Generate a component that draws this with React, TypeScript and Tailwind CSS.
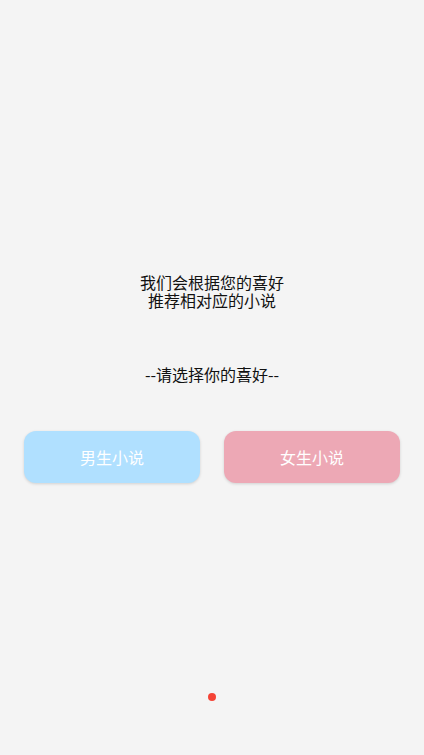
import React from "react";

export default function App() {
  return (
    <div
      className="relative h-[755px] w-[424px] bg-[#f4f4f4] flex flex-col justify-center overflow-hidden"
      style={{ fontFamily: '"Noto Sans CJK SC", "Noto Sans", sans-serif' }}
    >
      <div className="flex flex-col items-center text-[16px] leading-[18px] text-[#111]">
        <p>我们会根据您的喜好</p>
        <p>推荐相对应的小说</p>
        <p className="mt-[56px]">--请选择你的喜好--</p>
      </div>
      <div className="mt-[48px] flex justify-center gap-6 px-6">
        <button className="h-[52px] flex-1 rounded-[12px] bg-[#b0e0ff] text-[16px] text-white shadow-[0_1px_3px_rgba(0,0,0,0.15)]">
          男生小说
        </button>
        <button className="h-[52px] flex-1 rounded-[12px] bg-[#eda8b5] text-[16px] text-white shadow-[0_1px_3px_rgba(0,0,0,0.15)]">
          女生小说
        </button>
      </div>
      <div className="absolute left-[208px] top-[693px] h-2 w-2 rounded-full bg-[#f44336]" />
    </div>
  );
}
